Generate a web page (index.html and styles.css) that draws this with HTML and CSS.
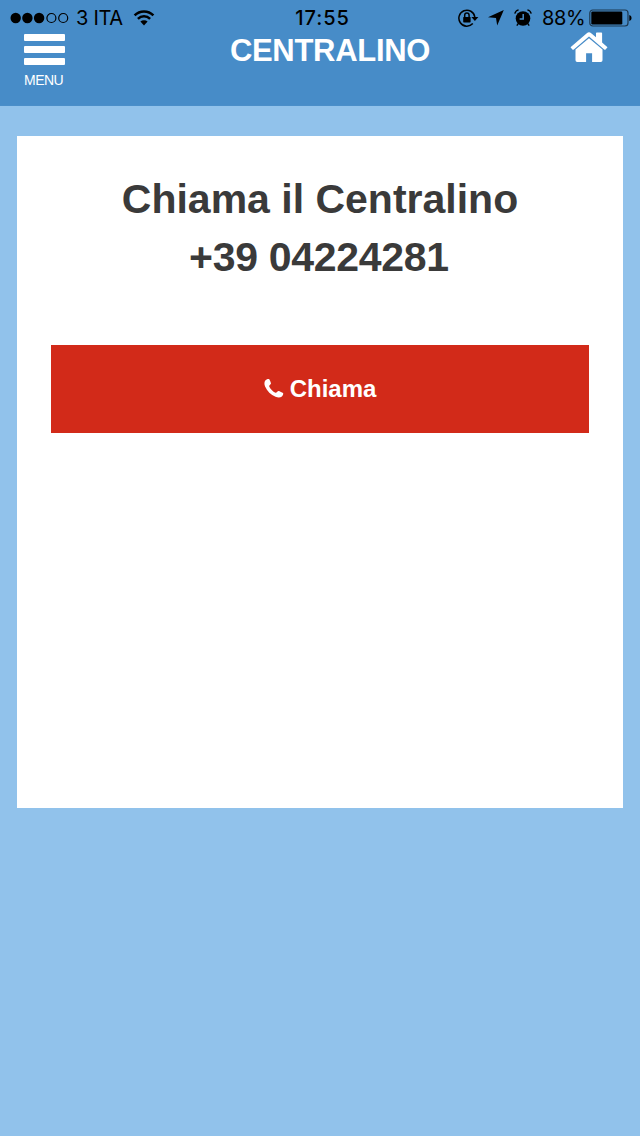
FILE: index.html
```html
<!DOCTYPE html>
<html lang="it">
<head>
    <meta charset="UTF-8">
    <meta name="viewport" content="width=device-width, initial-scale=1.0">
    <title>Centralino</title>
    <link rel="stylesheet" href="styles.css">
</head>
<body>
    <header class="header">
        <div class="status-bar">
            <div class="status-left">
                <svg class="signal" width="60" height="12" viewBox="0 0 60 12">
                    <circle cx="5.7" cy="6" r="5.2"/>
                    <circle cx="17.4" cy="6" r="5.2"/>
                    <circle cx="29.1" cy="6" r="5.2"/>
                    <circle cx="41.4" cy="6" r="4.5" class="empty"/>
                    <circle cx="53.2" cy="6" r="4.5" class="empty"/>
                </svg>
                <span class="carrier">3 ITA</span>
                <svg class="wifi" width="22" height="16" viewBox="0 0 22 16">
                    <path d="M1.6 5.4A13.3 13.3 0 0 1 20.4 5.4" class="wave"/>
                    <path d="M4.9 8.8A8.7 8.7 0 0 1 17.1 8.8" class="wave"/>
                    <path d="M11 15.6L7.4 11.6A5.3 5.3 0 0 1 14.6 11.6Z"/>
                </svg>
            </div>
            <div class="clock">17:55</div>
            <div class="status-right">
                <svg class="lock" width="21" height="18" viewBox="0 0 21 18">
                    <path d="M14.8 14.6A8 8 0 1 1 16.8 8" class="ring"/>
                    <path d="M13.4 8H20.4L16.9 12Z"/>
                    <rect x="5.2" y="8" width="7.4" height="5.4" rx=".6"/>
                    <path d="M6.7 8.4V6.3A2.2 2.2 0 0 1 11.1 6.3V8.4" class="ring"/>
                </svg>
                <svg class="arrow" width="16" height="16" viewBox="0 0 16 16">
                    <path d="M15.8 0L9.2 15.6L8 7.9L0 7.2Z"/>
                </svg>
                <svg class="alarm" width="18" height="18" viewBox="0 0 18 18">
                    <circle cx="9" cy="9.5" r="7.3"/>
                    <path d="M.8 4.6A5 5 0 0 1 4.6 .9M13.4 .9A5 5 0 0 1 17.2 4.6" class="bell"/>
                    <path d="M4.2 14.6L2.8 16.6M13.8 14.6L15.2 16.6" class="bell"/>
                    <path d="M9.2 5V9.9H5.6" class="hands"/>
                </svg>
                <span class="percent">88%</span>
                <svg class="battery" width="43" height="18" viewBox="0 0 43 18">
                    <rect x=".8" y="1" width="38.2" height="16" rx="3" class="shell"/>
                    <rect x="2.3" y="2.6" width="31" height="12.8" rx="1.2"/>
                    <path d="M40.3 6Q42.6 6.6 42.6 9Q42.6 11.4 40.3 12Z"/>
                </svg>
            </div>
        </div>
        <div class="nav">
            <a href="#" class="menu">
                <span class="bar"></span>
                <span class="bar"></span>
                <span class="bar"></span>
                <span class="menu-label">MENU</span>
            </a>
            <h1>CENTRALINO</h1>
            <a href="#" class="home">
                <svg width="38" height="32" viewBox="0 0 38 32">
                    <path d="M5.5 18.6L19 7.2L32.5 18.6V29.3Q32.5 31 30.8 31H22.1V22.2H16.1V31H7.2Q5.5 31 5.5 29.3Z"/>
                    <path d="M.5 16.3L16.8 2.2Q19 .4 21.2 2.2L26 6.3V2.2Q26 1.4 26.8 1.4H31.3Q32.1 1.4 32.1 2.2V11.5L37.5 16.3L35.6 18.5Q35 19 34.2 18.4L19 5.4L3.8 18.4Q3 19 2.4 18.5Z"/>
                </svg>
            </a>
        </div>
    </header>

    <main class="card">
        <h2>Chiama il Centralino<br><span class="number">+39 04224281</span></h2>
        <a href="tel:+3904224281" class="call">
            <svg width="20" height="20" viewBox="0 0 20 20">
                <path d="M1.5 2.2C3 .8 4.8.6 5.3 1.2C6 2.3 6.7 4.2 7 5.3C7.2 6.5 4.9 7.2 5.2 8.5C6 10.8 9 13.8 11.4 14.7C12.7 15.1 13.4 12.8 14.6 13C15.8 13.3 18 14.4 19 15.1C19.6 15.6 19.1 17.6 17.9 18.6C16.2 19.8 13.9 19.8 11.5 18.8C6.9 16.8 3.1 13 1.1 8.4C.1 6 .2 3.7 1.5 2.2Z"/>
            </svg>
            <span>Chiama</span>
        </a>
    </main>
</body>
</html>
```
FILE: styles.css
```css
* {
    box-sizing: border-box;
}

body {
    margin: 0;
    min-height: 1136px;
    background: #91c2eb;
    font-family: "Liberation Sans", Arial, sans-serif;
}

a {
    text-decoration: none;
}

svg {
    display: block;
    flex: none;
}

.header {
    height: 106px;
    background: #478cc8;
    border-bottom: 1px solid #4a8ec9;
}

.status-bar {
    display: grid;
    grid-template-columns: 1fr auto 1fr;
    align-items: center;
    height: 34px;
    padding: 1px 8px 0 10px;
    font-family: Inter, Roboto, sans-serif;
    font-size: 20px;
    line-height: 34px;
    color: #000;
}

.status-left,
.status-right {
    display: flex;
    align-items: center;
    height: 34px;
}

.status-right {
    justify-content: flex-end;
}

.signal .empty {
    fill: none;
    stroke: #000;
    stroke-width: 1.2;
}

.carrier {
    width: 48px;
    margin-left: 6px;
    letter-spacing: -0.3px;
}

.wifi {
    margin-left: 9px;
}

.wifi .wave {
    fill: none;
    stroke: #000;
    stroke-width: 2.5;
}

.clock {
    padding-left: 3px;
    font-weight: 500;
    letter-spacing: 0.9px;
}

.lock .ring {
    fill: none;
    stroke: #000;
    stroke-width: 1.5;
}

.arrow {
    margin-left: 9px;
}

.alarm {
    margin-left: 10px;
}

.alarm .bell {
    fill: none;
    stroke: #000;
    stroke-width: 1.4;
}

.alarm .hands {
    fill: none;
    stroke: #478cc8;
    stroke-width: 1.5;
}

.percent {
    width: 42px;
    margin: 0 5px 0 10px;
    letter-spacing: -0.4px;
}

.battery .shell {
    fill: none;
    stroke: #1d3850;
    stroke-width: 1.2;
}

.nav {
    display: grid;
    grid-template-columns: 76px 1fr 60px;
    padding: 0 20px 0 24px;
}

.menu {
    display: flex;
    flex-direction: column;
    gap: 5px;
    width: 41px;
    color: #fff;
}

.bar {
    height: 7px;
    background: #fff;
    border-radius: 1px;
}

.menu-label {
    margin-top: 2px;
    font-size: 14px;
    line-height: 16px;
    letter-spacing: -0.5px;
}

h1 {
    margin: 0;
    font-size: 31px;
    line-height: 34px;
    letter-spacing: -0.3px;
    text-align: center;
    color: #fff;
}

.home {
    justify-self: end;
    margin: -3px 12px 0 0;
    fill: #fff;
}

.card {
    height: 672px;
    margin: 30px 17px 0;
    padding: 34px 34px 0;
    background: #fff;
}

h2 {
    margin: 0;
    font-size: 41px;
    line-height: 58px;
    text-align: center;
    color: #3a3a3a;
}

.number {
    padding-right: 2px;
    letter-spacing: -0.3px;
}

.call {
    display: flex;
    justify-content: center;
    align-items: center;
    gap: 6px;
    height: 88px;
    margin-top: 59px;
    background: #d22a19;
    color: #fff;
    font-size: 24px;
    font-weight: bold;
    fill: #fff;
}

.call svg {
    margin-bottom: 2px;
}
```
